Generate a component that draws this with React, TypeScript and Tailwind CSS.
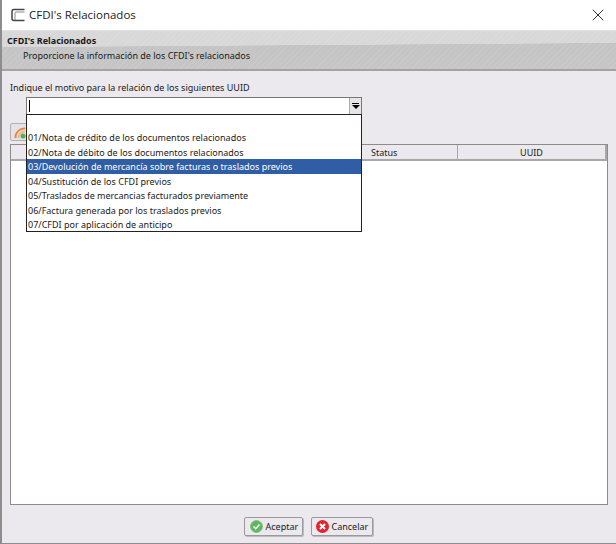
import { X } from "lucide-react";

const opciones = [
  "01/Nota de crédito de los documentos relacionados",
  "02/Nota de débito de los documentos relacionados",
  "03/Devolución de mercancía sobre facturas o traslados previos",
  "04/Sustitución de los CFDI previos",
  "05/Traslados de mercancias facturados previamente",
  "06/Factura generada por los traslados previos",
  "07/CFDI por aplicación de anticipo",
];

const tahoma = "font-['Noto_Sans',sans-serif] text-[9px] text-[#1a1a1a]";

const App = () => {
  return (
    <div className="relative flex h-[544px] w-[616px] overflow-hidden bg-white">
      <div className="w-[2px] shrink-0 bg-[#8d8d8d]" />
      <div className="flex min-w-0 flex-1 flex-col">
        {/* barra de titulo */}
        <div className="flex h-[30px] shrink-0 items-center bg-white pl-[8px] pr-[8px]">
          <svg width="16" height="16" viewBox="0 0 16 16" fill="none">
            <path d="M14.5 2.5H4Q2 2.5 2 4.5V11.5Q2 13.5 4 13.5H14.5" stroke="#444" strokeWidth="1.5" />
            <path d="M14.5 5H6Q5 5 5 6V13" stroke="#888" strokeWidth="1" />
          </svg>
          <span className="ml-[3px] font-['Open_Sans',sans-serif] text-[11.5px] text-[#222]">CFDI's Relacionados</span>
          <X className="ml-auto text-[#333]" size={20} strokeWidth={1.2} />
        </div>

        {/* encabezado */}
        <div className={`flex h-[41px] shrink-0 flex-col border-t border-b-2 border-t-[#e2e2e2] border-b-[#a3a3a3] bg-[repeating-linear-gradient(135deg,rgba(255,255,255,0.07)_0,rgba(255,255,255,0.07)_1px,transparent_1px,transparent_4px),linear-gradient(179.6deg,#d8d8d8_0,#d8d8d8_38%,#c4c4c4_39%,#c6c6c6_100%)] ${tahoma}`}>
          <span className="pl-[5px] pt-[3px] font-bold leading-[13px]">CFDI's Relacionados</span>
          <span className="pl-[21px] pt-[2px] leading-[13px]">Proporcione la información de los CFDI's relacionados</span>
        </div>

        {/* contenido */}
        <div className="flex min-h-0 flex-1 flex-col bg-[#ebe9ed] pl-[8px] pr-[8px]">
          <span className={`pt-[10px] leading-[13px] ${tahoma}`}>Indique el motivo para la relación de los siguientes UUID</span>
          <div className="ml-[16px] mt-[3px] flex h-[18px] w-[336px] border border-[#777] bg-white">
            <div className="ml-[2px] mt-[2px] h-[12px] w-px bg-black" />
            <div className="ml-auto flex w-[12px] flex-col items-center justify-center border-l border-[#aaa] bg-[#e6e6e6]">
              <div className="h-px w-[7px] bg-black" />
              <div className="mt-px h-0 w-0 border-x-[4px] border-t-[4px] border-x-transparent border-t-black" />
            </div>
          </div>

          <div className="mt-[8px] flex h-[18px] w-[24px] items-center rounded-[2px] border border-[#b0b0b0] bg-[#e4e2e6] pl-[3px]">
            <svg width="13" height="13" viewBox="0 0 13 13" fill="none">
              <path d="M1.5 12A9 9 0 0 1 11 2.5" stroke="#e8883a" strokeWidth="2" />
              <path d="M4.5 12A6 6 0 0 1 11 5.5" stroke="#f2b27a" strokeWidth="1.5" />
              <circle cx="9" cy="10" r="2.5" fill="#5fae4a" />
            </svg>
          </div>

          {/* tabla */}
          <div className="mt-[3px] flex h-[361px] flex-col border border-[#8c8c8c] bg-white">
            <div className={`flex h-[16px] shrink-0 border-b-2 border-[#a8a8a8] bg-[#ebe9ed] ${tahoma}`}>
              <div className="flex-1 border-r border-[#a8a8a8] pl-[360px] leading-[16px]">Status</div>
              <div className="w-[149px] border-r-2 border-[#a8a8a8] text-center leading-[16px]">UUID</div>
            </div>
          </div>

          {/* botones */}
          <div className="mt-[12px] flex justify-center gap-[8px] pr-[2px]">
            <button className={`flex h-[19px] w-[59px] items-center gap-[3px] rounded-[2px] border border-[#9a9a9a] bg-[#ebe9ed] pl-[5px] shadow-[1px_1px_0_#bbb] ${tahoma}`}>
              <svg width="13" height="13" viewBox="0 0 13 13">
                <circle cx="6.5" cy="6.5" r="6" fill="#5cb85c" stroke="#8fb98f" />
                <path d="M3.5 6.5L5.7 8.7L9.5 4.5" stroke="#fff" strokeWidth="1.6" fill="none" />
              </svg>
              Aceptar
            </button>
            <button className={`flex h-[19px] w-[62px] items-center gap-[3px] rounded-[2px] border border-[#9a9a9a] bg-[#ebe9ed] pl-[4px] shadow-[1px_1px_0_#bbb] ${tahoma}`}>
              <svg width="13" height="13" viewBox="0 0 13 13">
                <circle cx="6.5" cy="6.5" r="6.5" fill="#e2242c" />
                <path d="M4 4L9 9M9 4L4 9" stroke="#fff" strokeWidth="2" />
              </svg>
              Cancelar
            </button>
          </div>
        </div>
        <div className="h-px shrink-0 bg-[#8d8d8d]" />
      </div>

      {/* lista desplegada */}
      <div className={`absolute left-[26px] top-[114px] h-[118px] w-[336px] border border-[#222] bg-white pt-[15px] ${tahoma}`}>
        {opciones.map((texto, i) => (
          <div
            key={texto}
            className={`h-[14.5px] whitespace-nowrap pl-[1px] leading-[16px] ${i === 2 ? "bg-[#2f5ea6] text-white" : ""}`}
          >
            {texto}
          </div>
        ))}
      </div>
    </div>
  );
};

export default App;
